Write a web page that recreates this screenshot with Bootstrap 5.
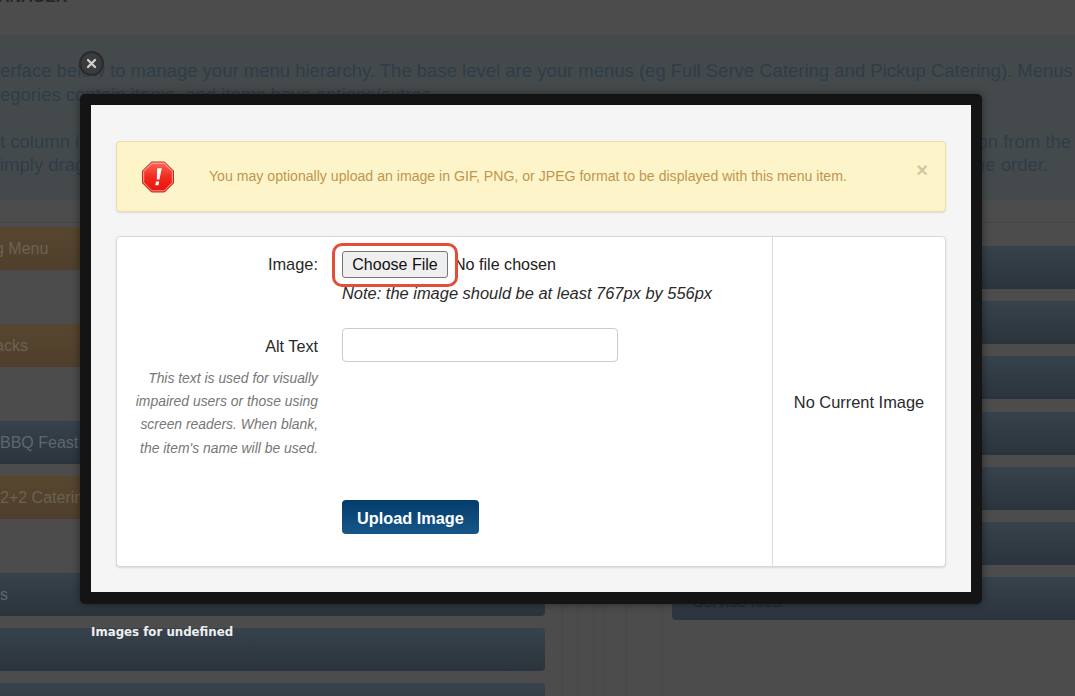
<!DOCTYPE html>
<html lang="en">
<head>
<meta charset="utf-8">
<title>Menu Manager</title>
<link rel="stylesheet" href="https://cdn.jsdelivr.net/npm/bootstrap@5.3.0/dist/css/bootstrap.min.css">
<script src="https://cdn.jsdelivr.net/npm/bootstrap@5.3.0/dist/js/bootstrap.bundle.min.js"></script>
<style>
html,body{margin:0;height:696px;overflow:hidden;background:#4c4c4c;font-family:"Liberation Sans",Arial,sans-serif}
.stage{position:relative;width:1075px;height:696px;overflow:hidden;background:#4c4c4c}
.titlebar{color:#262626;font-weight:700;font-size:16px;line-height:18px;margin:-12px 0 0 -2px;height:47px;white-space:nowrap}
.infoband{height:165px;background:#444a4b;color:#2f3d48;font-size:18.5px;line-height:23.5px;padding-top:24px;white-space:nowrap}
.subband{height:23px;border-bottom:1px solid #464646}
.leftcol{width:545px;flex:none}
.gutter{width:127px;flex:none;background-image:linear-gradient(#474747,#474747),linear-gradient(#474747,#474747),linear-gradient(#474747,#474747),linear-gradient(#474747,#474747),linear-gradient(#474747,#474747),linear-gradient(#474747,#474747);background-size:1px 100%;background-repeat:no-repeat;background-position:17px 0,32px 0,48px 0,59px 0,81px 0,117px 0}
.rightcol{flex:1;padding-top:23px}
.mrow{height:43px;font-size:16px;line-height:43px;white-space:nowrap;margin-top:12px;overflow:hidden}
.mrow.far{margin-top:54px}
.mrow.first{margin-top:4px}
.mrow.shift-a{text-indent:-5px}
.mrow.tone-o{background:linear-gradient(#57462f,#4f3f2c);color:#6b6252}
.mrow.tone-b{background:linear-gradient(#37424c,#2b343c);color:#5d6771;border-radius:0 4px 4px 0}
.rightcol .mrow.tone-b{border-radius:4px 0 0 4px;color:#222a31;padding-left:21px;line-height:49px}
.rightcol .mrow:first-child{margin-top:0}
.rightcol .mrow.sp{margin-top:12.2px}
.closer{position:absolute;left:78.5px;top:51px;width:25px;height:25px;border-radius:50%;background:#3b3b3b;border:2px solid #282a2b;display:flex;align-items:center;justify-content:center;z-index:3}
.mbox{position:absolute;left:80px;top:94px;width:902px;height:510px;background:#141414;border-radius:5px;padding:11px;box-shadow:0 0 8px rgba(0,0,0,.45);z-index:2}
.mface{height:487px;background:#f5f5f5;padding:36px 25px 24px 25px}
.notice{height:71px;background:#fdf5c9;border:1px solid #ebdfa8;border-radius:4px;box-shadow:0 1px 2px rgba(0,0,0,.1);color:#c0964f;font-size:14.12px;padding:0 0 0 24px;margin:0 0 24px 0;position:relative}
.noticetext{margin-left:34px}
.notice-x{position:absolute;right:17px;top:18px;color:#cfc8a4;font-size:20px;font-weight:700;line-height:20px;background:none;border:0;padding:0}
.sheet{height:331px;background:#fff;border:1px solid #d8d8d8;border-radius:4px;box-shadow:0 1px 2px rgba(0,0,0,.12);font-size:16.4px;color:#2a2a2a}
.sheet-main{flex:1;padding-top:14px}
.sheet-side{width:173px;flex:none;border-left:1px solid #dcdcdc;padding-top:2px}
.lab{width:201px;flex:none;text-align:right;margin-right:24px}
.choose{height:27px;width:106px;padding:0;background:#efefef;border:1px solid #767676;border-radius:3px;color:#111;font-size:16px;line-height:25px;font-family:inherit}
.nofile{font-size:16.1px;margin-left:6px;color:#222}
.ring{position:absolute;left:215px;top:-8px;width:126px;height:44px;border:3px solid #e44d36;border-radius:10px;pointer-events:none}
.imgline{position:relative;height:27px;line-height:27px}
.notetext{font-style:italic;line-height:23.5px;margin-top:4px;font-size:16.45px}
.altrow{margin-top:22px}
.altlabel{line-height:36px;font-size:16.2px}
.altinput{width:276px;height:34px;border:1px solid #ccc;border-radius:4px;display:block;padding:0 8px;box-shadow:none}
.helptext{font-style:italic;font-size:13.9px;line-height:23.4px;color:#777;margin-top:3px;padding-left:12px}
.uploadbtn{margin:39.5px 0 0 225px;width:137px;height:34px;padding:2px 0 0;background:linear-gradient(#033c6b,#16578a);border:0;border-radius:4px;color:#fff;font-weight:700;font-size:16.3px;line-height:32px;display:block}
.caption{position:absolute;left:91px;top:624px;color:#eee;font:700 11.8px/16px "DejaVu Sans",sans-serif;z-index:3;white-space:nowrap}
.tailgap{padding-right:4px}
.tailgap2{padding-right:27px}
</style>
</head>
<body>
<div class="stage">
  <div class="titlebar">ANAGER</div>
  <div class="infoband">
    <div>erface below to manage your menu hierarchy. The base level are your menus (eg Full Serve Catering and Pickup Catering). Menus</div>
    <div>egories contain items, and items have options/extras.</div>
    <div>&nbsp;</div>
    <div class="d-flex justify-content-between"><span>t column in</span><span class="tailgap">on from the</span></div>
    <div class="d-flex justify-content-between"><span>imply drag</span><span class="tailgap2">ne order.</span></div>
  </div>
  <div class="subband"></div>
  <div class="d-flex">
    <div class="leftcol">
      <div class="mrow first shift-a tone-o">g Menu</div>
      <div class="mrow far shift-a tone-o">acks</div>
      <div class="mrow far tone-b">BBQ Feast</div>
      <div class="mrow tone-o">2+2 Catering</div>
      <div class="mrow far tone-b">s</div>
      <div class="mrow tone-b"></div>
      <div class="mrow tone-b"></div>
    </div>
    <div class="gutter"></div>
    <div class="rightcol">
      <div class="mrow tone-b"></div>
      <div class="mrow sp tone-b"></div>
      <div class="mrow sp tone-b"></div>
      <div class="mrow sp tone-b"></div>
      <div class="mrow sp tone-b"></div>
      <div class="mrow sp tone-b"></div>
      <div class="mrow sp tone-b">Service fees</div>
    </div>
  </div>

  <button type="button" class="closer p-0" aria-label="Close">
    <svg width="11" height="11" viewBox="0 0 11 11"><path d="M2 2l7 7M9 2l-7 7" stroke="#cfcfcf" stroke-width="2.3" stroke-linecap="round"/></svg>
  </button>

  <div class="mbox">
    <div class="mface">
      <div class="notice alert d-flex align-items-center" role="alert">
        <svg width="34" height="34" viewBox="0 0 34 34" class="flex-shrink-0">
          <defs><linearGradient id="octa" x1="0" y1="0" x2="0" y2="1"><stop offset="0" stop-color="#fb6a5c"/><stop offset=".5" stop-color="#f3291f"/><stop offset="1" stop-color="#e8120f"/></linearGradient></defs>
          <polygon points="10.5,2 23.5,2 32.5,11 32.5,23 23.5,32 10.5,32 1.5,23 1.5,11" fill="url(#octa)" stroke="#b8322a" stroke-width="1"/>
          <polygon points="11,3.2 23,3.2 31.3,11.5 31.3,22.5 23,30.8 11,30.8 2.7,22.5 2.7,11.5" fill="none" stroke="#ffc9c0" stroke-width="1" opacity=".75"/>
          <path d="M16.2 8.2h4.6l-2.4 11.2h-2.6zM15 21.6h3.2l-.7 3.6h-3.2z" fill="#fff"/>
        </svg>
        <span class="noticetext">You may optionally upload an image in GIF, PNG, or JPEG format to be displayed with this menu item.</span>
        <button type="button" class="notice-x" aria-label="Dismiss">×</button>
      </div>
      <div class="sheet d-flex">
        <div class="sheet-main">
          <div class="d-flex imgline">
            <div class="lab">Image:</div>
            <div class="d-flex align-items-center">
              <button type="button" class="choose">Choose File</button><span class="nofile">No file chosen</span>
            </div>
            <span class="ring"></span>
          </div>
          <div class="d-flex">
            <div class="lab"></div>
            <div class="notetext">Note: the image should be at least 767px by 556px</div>
          </div>
          <div class="d-flex altrow">
            <div class="lab">
              <div class="altlabel">Alt Text</div>
              <div class="helptext">This text is used for visually impaired users or those using screen readers. When blank, the item's name will be used.</div>
            </div>
            <div><input type="text" class="altinput form-control" aria-label="Alt Text"></div>
          </div>
          <button type="button" class="uploadbtn btn">Upload Image</button>
        </div>
        <div class="sheet-side d-flex align-items-center justify-content-center">No Current Image</div>
      </div>
    </div>
  </div>

  <div class="caption">Images for undefined</div>
</div>
</body>
</html>
